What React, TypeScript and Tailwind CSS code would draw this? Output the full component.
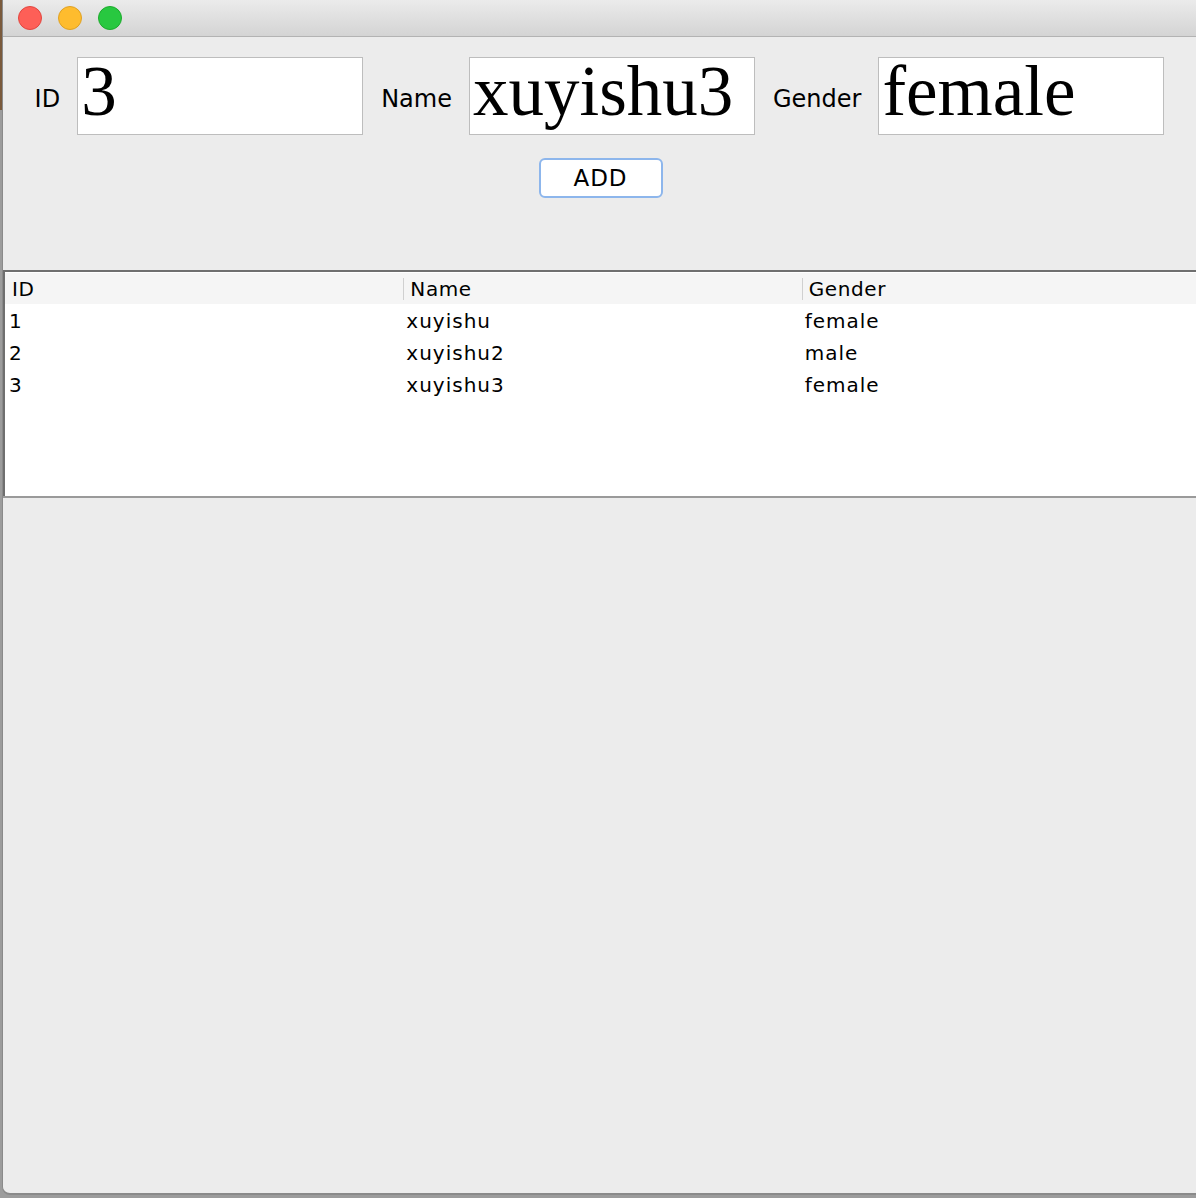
import React from 'react';

interface Persona {
  id: number;
  name: string;
  gender: string;
}

const filas: Persona[] = [
  { id: 1, name: 'xuyishu', gender: 'female' },
  { id: 2, name: 'xuyishu2', gender: 'male' },
  { id: 3, name: 'xuyishu3', gender: 'female' },
];

const ui = { fontFamily: '"DejaVu Sans", Verdana, sans-serif' };
const serif = { fontFamily: '"Liberation Serif", "Times New Roman", serif' };

function Campo({ label, value }: { label: string; value: string }) {
  return (
    <div className="flex items-center gap-[17px]">
      <span className="mt-[6px] text-[24px] text-black" style={ui}>
        {label}
      </span>
      <div
        className="w-[286px] h-[78px] bg-white border border-[#bdbdbd] px-[3px] text-[71px] leading-[66px] text-black whitespace-nowrap"
        style={serif}
      >
        {value}
      </div>
    </div>
  );
}

export default function App() {
  return (
    <div className="w-screen h-screen overflow-hidden bg-[#9c9c9c] relative">
      {/* borde del escritorio a la izquierda */}
      <div className="absolute left-0 top-0 w-[2px] h-[110px] bg-[#7a5a3c]" />

      <div className="ml-[2px] w-[1198px] h-[1195px] flex flex-col bg-[#ececec] border-l border-b-2 border-[#8a8a8a] rounded-bl-[8px] overflow-hidden">
        {/* barra de título */}
        <div className="h-[37px] shrink-0 flex items-center gap-[16px] pl-[15px] bg-gradient-to-b from-[#ebebeb] to-[#d4d4d4] border-b border-[#b3b3b3]">
          <span className="w-[24px] h-[24px] rounded-full bg-[#fe5f57] border border-[#e2463f]" />
          <span className="w-[24px] h-[24px] rounded-full bg-[#febc2e] border border-[#dfa123]" />
          <span className="w-[24px] h-[24px] rounded-full bg-[#28c840] border border-[#1cab2c]" />
        </div>

        {/* formulario */}
        <div className="flex justify-center gap-[18px] pt-[20px] pr-[4px]">
          <Campo label="ID" value="3" />
          <Campo label="Name" value="xuyishu3" />
          <Campo label="Gender" value="female" />
        </div>

        <div className="flex justify-center pt-[23px] pr-[2px]">
          <button
            className="w-[124px] h-[40px] bg-white border-2 border-[#8db6ec] rounded-[6px] text-[23px] tracking-[1px] text-black leading-none"
            style={ui}
          >
            ADD
          </button>
        </div>

        {/* tabla */}
        <div className="mt-[72px] bg-white border-t-2 border-l-2 border-[#6f6f6f] h-[228px] flex flex-col" style={ui}>
          <div className="mt-[1px] h-[31px] bg-[#f5f5f5] grid grid-cols-3 items-center text-[20px] tracking-[0.6px] text-black">
            <div className="pl-[7px]">ID</div>
            <div className="flex items-center h-full">
              <span className="w-px h-[22px] bg-[#d0d0d0]" />
              <span className="pl-[6px]">Name</span>
            </div>
            <div className="flex items-center h-full">
              <span className="w-px h-[22px] bg-[#d0d0d0]" />
              <span className="pl-[6px]">Gender</span>
            </div>
          </div>
          <div className="pt-[1px] flex-1">
            {filas.map((f) => (
              <div key={f.id} className="h-[32px] grid grid-cols-3 items-center text-[20px] tracking-[1px] text-black">
                <div className="pl-[4px]">{f.id}</div>
                <div className="pl-[3px]">{f.name}</div>
                <div className="pl-[3px]">{f.gender}</div>
              </div>
            ))}
          </div>
          <div className="h-[2px] bg-[#9a9a9a] -ml-[2px]" />
        </div>

        <div className="flex-1" />
      </div>
    </div>
  );
}
